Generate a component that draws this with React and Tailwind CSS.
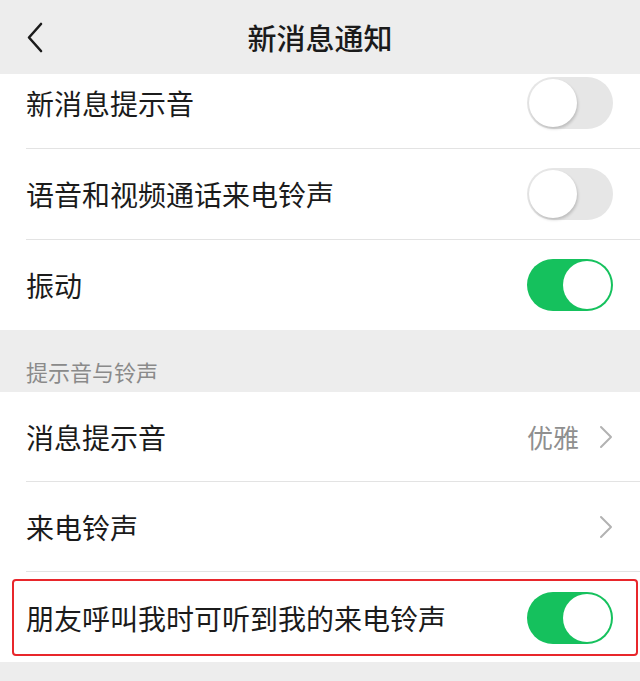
import React from 'react';

const FONT = { fontFamily: '"Noto Sans CJK SC", "Noto Sans", sans-serif' };

const Toggle = ({ on }) =>
  on ? (
    <div className="w-[86px] h-[52px] rounded-full bg-[#15c15d] flex items-center justify-end pr-[2px]">
      <div className="w-[48px] h-[48px] rounded-full bg-white" />
    </div>
  ) : (
    <div className="w-[86px] h-[52px] rounded-full bg-[#e6e6e6] flex items-center pl-[2px]">
      <div className="w-[48px] h-[48px] rounded-full bg-white shadow-[1px_2px_3px_rgba(0,0,0,0.18)]" />
    </div>
  );

const Chevron = () => (
  <svg width="14" height="24" viewBox="0 0 14 24" fill="none">
    <path d="M2 2l10 10-10 10" stroke="#b2b2b2" strokeWidth="2" strokeLinecap="round" strokeLinejoin="round" />
  </svg>
);

const Row = ({ label, right, divider = true, tall = true }) => (
  <div className="relative bg-white">
    <div className={`${tall ? 'h-[90px]' : 'h-[89px]'} flex items-center justify-between pl-[26px] pr-[27px]`}>
      <span className="text-[28px] text-[#1b1b1b] leading-none">{label}</span>
      {right}
    </div>
    {divider && <div className="ml-[26px] h-px bg-[#e3e3e3]" />}
  </div>
);

export default function App() {
  return (
    <div className="w-[640px] h-[681px] bg-[#ededed] overflow-hidden flex flex-col" style={FONT}>
      <header className="h-[74px] shrink-0 relative flex items-center justify-center bg-[#ededed]">
        <svg className="absolute left-[26px] top-[22px]" width="18" height="31" viewBox="0 0 18 31" fill="none">
          <path d="M15 2L3 15.5 15 29" stroke="#1b1b1b" strokeWidth="2.6" strokeLinecap="round" strokeLinejoin="round" />
        </svg>
        <h1 className="text-[29px] font-medium text-[#1b1b1b] leading-none">新消息通知</h1>
      </header>

      <div className="flex-1 overflow-hidden">
        <div className="-mt-[16px]">
          <Row label="新消息提示音" right={<Toggle on={false} />} />
          <Row label="语音和视频通话来电铃声" right={<Toggle on={false} />} />
          <Row label="振动" right={<Toggle on />} divider={false} />

          <div className="h-[62px] flex items-end pl-[26px] pb-[10px]">
            <span className="text-[22px] text-[#8a8a8a] leading-none">提示音与铃声</span>
          </div>

          <Row
            tall={false}
            label="消息提示音"
            right={
              <div className="flex items-center gap-[20px]">
                <span className="text-[26px] text-[#8f8f8f] leading-none">优雅</span>
                <Chevron />
              </div>
            }
          />
          <Row tall={false} label="来电铃声" right={<Chevron />} />
          <div className="relative bg-white">
            <div className="h-[90px] flex items-center justify-between pl-[26px] pr-[27px] pt-[2px]">
              <span className="text-[28px] text-[#1b1b1b] leading-none">朋友呼叫我时可听到我的来电铃声</span>
              <Toggle on />
            </div>
            <div className="absolute left-[12px] right-[2px] top-[7px] bottom-[6px] border-2 border-[#e8262b] rounded-[4px]" />
          </div>
        </div>
      </div>
    </div>
  );
}
